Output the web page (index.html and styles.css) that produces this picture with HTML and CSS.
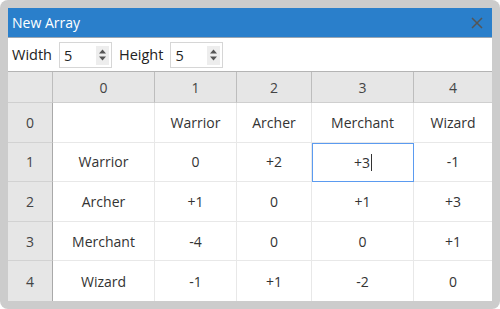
FILE: index.html
```html
<!DOCTYPE html>
<html lang="en">
<head>
  <meta charset="UTF-8" />
  <title>New Array</title>
  <link rel="stylesheet" href="styles.css">
</head>
<body>
  <div class="frame">
    <div class="window">
      <div class="titlebar">
        <span class="title">New Array</span>
        <svg class="close" width="12" height="12" viewBox="0 0 12 12">
          <path d="M1 1L11 11M11 1L1 11" stroke="#555" stroke-width="1.5" fill="none" />
        </svg>
      </div>
      <div class="toolbar">
        <label>Width</label>
        <div class="spin">
          <span class="val">5</span>
          <span class="arrows">
            <svg width="9" height="14" viewBox="0 0 9 14"><path d="M1 5.5L4.5 1.5L8 5.5Z M1 8.5L4.5 12.5L8 8.5Z" fill="#555" /></svg>
          </span>
        </div>
        <label>Height</label>
        <div class="spin">
          <span class="val">5</span>
          <span class="arrows">
            <svg width="9" height="14" viewBox="0 0 9 14"><path d="M1 5.5L4.5 1.5L8 5.5Z M1 8.5L4.5 12.5L8 8.5Z" fill="#555" /></svg>
          </span>
        </div>
      </div>
      <div class="grid">
        <div class="corner"></div>
        <div class="colhead">0</div>
        <div class="colhead">1</div>
        <div class="colhead">2</div>
        <div class="colhead">3</div>
        <div class="colhead">4</div>

        <div class="rowhead">0</div>
        <div class="cell"></div>
        <div class="cell">Warrior</div>
        <div class="cell">Archer</div>
        <div class="cell">Merchant</div>
        <div class="cell">Wizard</div>

        <div class="rowhead">1</div>
        <div class="cell">Warrior</div>
        <div class="cell">0</div>
        <div class="cell">+2</div>
        <div class="cell editing"><span>+3</span><span class="caret"></span></div>
        <div class="cell">-1</div>

        <div class="rowhead">2</div>
        <div class="cell">Archer</div>
        <div class="cell">+1</div>
        <div class="cell">0</div>
        <div class="cell">+1</div>
        <div class="cell">+3</div>

        <div class="rowhead">3</div>
        <div class="cell">Merchant</div>
        <div class="cell">-4</div>
        <div class="cell">0</div>
        <div class="cell">0</div>
        <div class="cell">+1</div>

        <div class="rowhead">4</div>
        <div class="cell">Wizard</div>
        <div class="cell">-1</div>
        <div class="cell">+1</div>
        <div class="cell">-2</div>
        <div class="cell">0</div>
      </div>
    </div>
  </div>
</body>
</html>
```

FILE: styles.css
```css
html, body {
  margin: 0;
  background: #fff;
}
body {
  font-family: "Open Sans", "Noto Sans", sans-serif;
  font-size: 14px;
  color: #333;
}
.frame {
  width: 500px;
  height: 309px;
  box-sizing: border-box;
  padding: 8px;
  background: #cccccc;
  border-radius: 8px;
}
.window {
  height: 293px;
  background: #fff;
  display: flex;
  flex-direction: column;
}
.titlebar {
  height: 29px;
  background: #2a7fcb;
  border-bottom: 1px solid #9aa6b2;
  display: flex;
  align-items: center;
  justify-content: space-between;
  padding: 0 9px 0 4px;
}
.title {
  color: #fff;
  font-size: 14px;
}
.close {
  margin-top: 1px;
}
.toolbar {
  height: 33px;
  border-bottom: 1px solid #b4b4b4;
  display: flex;
  align-items: center;
  padding-left: 4px;
  gap: 7px;
}
.toolbar label {
  font-size: 14.5px;
  color: #222;
}
.spin {
  width: 53px;
  height: 26px;
  box-sizing: border-box;
  border: 1px solid #d6d6d6;
  display: flex;
  align-items: center;
  justify-content: space-between;
  padding-left: 4px;
  margin-top: 1px;
}
.spin .val {
  font-size: 14.5px;
  color: #222;
}
.arrows {
  width: 13px;
  height: 19px;
  background: #ededed;
  margin-right: 2px;
  display: flex;
  align-items: center;
  justify-content: center;
}
.grid {
  flex: 1;
  display: grid;
  grid-template-columns: 45px 102px 82px 75px 102px 78px;
  grid-template-rows: 31px repeat(5, 1fr);
}
.grid > div {
  display: flex;
  align-items: center;
  justify-content: center;
  box-sizing: border-box;
}
.corner, .colhead {
  background: #e6e6e6;
  border-right: 1px solid #bdbdbd;
  border-bottom: 1px solid #cfcfcf;
  color: #444;
}
.colhead:nth-child(6) {
  border-right: none;
}
.rowhead {
  background: #e6e6e6;
  border-right: 1px solid #a9a9a9;
  border-bottom: 1px solid #d2d2d2;
  color: #444;
}
.cell {
  border-right: 1px solid #e8e8e8;
  border-bottom: 1px solid #e8e8e8;
}
.grid > div:nth-last-child(-n+6) {
  border-bottom: none;
}
.grid > .cell:nth-child(6n) {
  border-right: none;
}
.cell.editing {
  border: 1px solid #5b9bf0;
}
.caret {
  width: 1px;
  height: 17px;
  background: #333;
  margin-left: 1px;
}
```
